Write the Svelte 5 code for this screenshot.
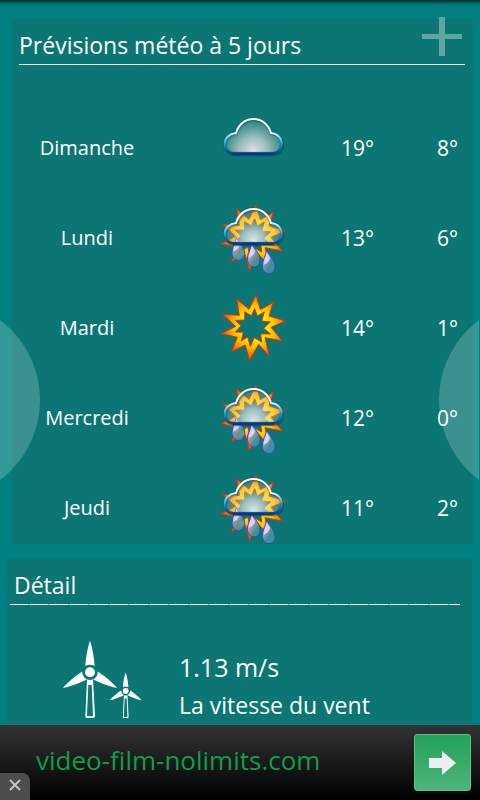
<script lang="ts">
	// Types/constants
	type Weather = 'cloud' | 'sun' | 'showers'

	type Forecast = {
		day: string
		weather: Weather
		label: string
		high: number
		low: number
	}

	const forecasts: Forecast[] = [
		{ day: 'Dimanche', weather: 'cloud', label: 'Nuageux', high: 19, low: 8 },
		{ day: 'Lundi', weather: 'showers', label: 'Averses', high: 13, low: 6 },
		{ day: 'Mardi', weather: 'sun', label: 'Ensoleillé', high: 14, low: 1 },
		{ day: 'Mercredi', weather: 'showers', label: 'Averses', high: 12, low: 0 },
		{ day: 'Jeudi', weather: 'showers', label: 'Averses', high: 11, low: 2 },
	]

	const cloudPath = 'M72 145C54 145 44 131 44 116C44 99 58 86 78 84C85 59 105 42 130 42C155 42 176 59 183 84C203 86 215 99 215 116C215 132 205 145 187 145Z'
	const sunPath = 'M138 30L151 74L190 52L177 93L226 108L183 127L217 168L165 158L178 213L146 178L118 226L106 180L64 200L82 157L33 146L77 124L38 88L88 91L80 42L117 73Z'
		+ 'M134 71L124 92L104 80L104 105L76 106L93 122L76 141L100 142L94 168L113 156L121 184L133 158L155 171L152 147L182 147L161 130L181 111L155 108L163 81L142 93Z'
</script>


<div class="app">
	<main>
		<section class="card forecast">
			<header>
				<h2>Prévisions météo à 5 jours</h2>
				<button type="button" class="add" aria-label="Ajouter">
					<svg viewBox="0 0 40 40" aria-hidden="true">
						<path d="M17 0H23V17H40V22H23V39H17V22H0V17H17Z" />
					</svg>
				</button>
			</header>

			<table>
				<colgroup>
					<col class="day" />
					<col />
					<col class="temperature" />
					<col class="temperature" />
				</colgroup>
				<tbody>
					{#each forecasts as forecast}
						<tr>
							<th scope="row">{forecast.day}</th>
							<td>{@render weatherIcon(forecast.weather, forecast.label)}</td>
							<td>{forecast.high}°</td>
							<td>{forecast.low}°</td>
						</tr>
					{/each}
				</tbody>
			</table>
		</section>

		<section class="card detail">
			<header>
				<h2>Détail</h2>
			</header>

			<div class="wind">
				<svg viewBox="66 30 240 240" aria-hidden="true">
					{@render turbine()}
					<g transform="translate(257 183) scale(0.59) translate(-150 -127)">
						{@render turbine()}
					</g>
				</svg>
				<div>
					<p class="speed">1.13 m/s</p>
					<p>La vitesse du vent</p>
				</div>
			</div>
		</section>
	</main>

	<button type="button" class="pager previous" aria-label="Précédent"></button>
	<button type="button" class="pager next" aria-label="Suivant"></button>

	<aside>
		<a href="#video">video-film-nolimits.com</a>
		<button type="button" class="go" aria-label="Ouvrir">
			<svg viewBox="0 0 27 24" aria-hidden="true">
				<path d="M0 7H13V0L27 12L13 24V17H0Z" />
			</svg>
		</button>
		<button type="button" class="close" aria-label="Fermer">
			<svg viewBox="0 0 12 12" aria-hidden="true">
				<path d="M1 1L11 11M11 1L1 11" />
			</svg>
		</button>
	</aside>
</div>


{#snippet weatherIcon(weather: Weather, label: string)}
	<svg class="weather" viewBox="18 21 222 216" role="img" aria-label={label}>
		<defs>
			<linearGradient id="cloud-edge" gradientUnits="userSpaceOnUse" x1="0" y1="40" x2="0" y2="148">
				<stop offset="0" stop-color="#fff" />
				<stop offset="0.4" stop-color="#e8f4ff" />
				<stop offset="0.62" stop-color="#3cc0f4" />
				<stop offset="0.85" stop-color="#0a66b4" />
				<stop offset="1" stop-color="#073a88" />
			</linearGradient>
			<radialGradient id="cloud-fill" gradientUnits="userSpaceOnUse" cx="130" cy="140" r="95">
				<stop offset="0" stop-color="#e4e6e8" />
				<stop offset="0.45" stop-color="#c4d0d0" stop-opacity="0.8" />
				<stop offset="1" stop-color="#a0c0bc" stop-opacity="0.2" />
			</radialGradient>
			<radialGradient id="haze-fill" gradientUnits="userSpaceOnUse" cx="130" cy="136" r="95">
				<stop offset="0" stop-color="#e0e6e6" />
				<stop offset="0.35" stop-color="#ccd8d8" stop-opacity="0.75" />
				<stop offset="0.6" stop-color="#d8dcc8" stop-opacity="0.3" />
				<stop offset="1" stop-color="#d8dcc8" stop-opacity="0.15" />
			</radialGradient>
			<radialGradient id="sun-fill" gradientUnits="userSpaceOnUse" cx="134" cy="124" r="104">
				<stop offset="0.35" stop-color="#ffe800" />
				<stop offset="0.6" stop-color="#ffc000" />
				<stop offset="1" stop-color="#f04000" />
			</radialGradient>
			<linearGradient id="drop-fill" x1="0" y1="0" x2="1" y2="1">
				<stop offset="0.2" stop-color="#c4b4f0" />
				<stop offset="0.6" stop-color="#4c90a8" />
				<stop offset="1" stop-color="#30a8a8" />
			</linearGradient>
		</defs>

		{#if weather !== 'cloud'}
			<path d={sunPath} fill="url(#sun-fill)" fill-rule="evenodd" stroke="#e03010" stroke-width="3" />
		{/if}
		{#if weather === 'showers'}
			{@render drop(85, 127)}
			{@render drop(131, 146)}
			{@render drop(176, 166)}
		{/if}
		{#if weather !== 'sun'}
			<path class="shadow" d={cloudPath} />
			<path
				d={cloudPath}
				fill={weather === 'showers' ? 'url(#haze-fill)' : 'url(#cloud-fill)'}
				stroke="#164c60"
				stroke-width="10"
				stroke-opacity="0.5"
			/>
			<path d={cloudPath} fill="none" stroke="url(#cloud-edge)" stroke-width="6" />
			<path d="M68 147H192" stroke="#083880" stroke-width="8" />
		{/if}
	</svg>
{/snippet}

{#snippet drop(x: number, y: number)}
	<g transform="translate({x} {y})">
		<path
			d="M-6 0C-8 16 -19 28 -19 46C-19 60 -10 70 1 70C12 70 19 60 19 48C19 30 4 18 -6 0Z"
			fill="url(#drop-fill)"
			fill-opacity="0.85"
			stroke="#4040c0"
			stroke-width="3"
		/>
		<path d="M-6 6C-8 20 -16 30 -15 44C-6 38 2 34 4 22Z" fill="#dcd0ff" />
	</g>
{/snippet}

{#snippet turbine()}
	<circle cx="150" cy="127" r="15" />
	{#each [0, 120, 240] as angle}
		<path d="M136 108C138 78 144 48 150 33C156 48 162 78 164 108Q150 100 136 108Z" transform="rotate({angle} 150 127)" />
	{/each}
	<path d="M141 148Q150 152 159 148L165 258Q165 264 159 264H141Q135 264 136 258ZM145 165L141 256Q141 259 145 259H155Q159 259 159 256L155 165Z" fill-rule="evenodd" />
{/snippet}


<style>
	:global(body) {
		margin: 0;
		background: #008080;
	}

	.app {
		display: flex;
		flex-direction: column;
		height: 100vh;
		font-family: 'Open Sans', 'Noto Sans', sans-serif;
		color: #fff;
		background: linear-gradient(#002c2c, #007474 4px, #008080 8px);
	}

	main {
		flex: 1;
		min-height: 0;
		overflow: hidden;
		padding: 19px 7px 0;
	}

	button {
		padding: 0;
		border: 0;
		background: none;
		cursor: pointer;
	}

	h2,
	p {
		margin: 0;
		font-weight: 400;
	}

	h2 {
		font-size: 23px;
		line-height: 30px;
	}

	.card {
		background: #0b7674;

		> header {
			display: flex;
			justify-content: space-between;
			box-sizing: border-box;
			height: 46px;
			padding-top: 11px;
			border-bottom: 1px solid #fff;
		}
	}

	.forecast {
		margin-left: 5px;

		> header {
			margin: 0 8px 29px 7px;
		}
	}

	.add {
		width: 40px;
		height: 40px;
		margin: -13px 3px 0 0;

		svg {
			display: block;
			fill: #5fa5a4;
		}
	}

	table {
		width: 100%;
		padding-right: 15px;
		border-spacing: 0;
		table-layout: fixed;
		font-size: 21px;
		line-height: 30px;
	}

	.day {
		width: 150px;
	}

	.temperature {
		width: 84px;
	}

	th,
	td {
		height: 72px;
		padding: 18px 0 0;
		font-weight: 400;
		text-align: right;
	}

	th {
		font-size: 20px;
		text-align: center;
	}

	.weather {
		display: block;
		width: 74px;
		height: 72px;
		margin-left: auto;
	}

	.shadow {
		fill: none;
		stroke: #034a50;
		stroke-width: 6px;
		opacity: 0.5;
		transform: translate(4px, 6px);
	}

	.detail {
		margin: 15px 1px 0 0;

		> header {
			margin: 0 12px 0 3px;
			padding-left: 4px;
			border-bottom-style: none;
			background: repeating-linear-gradient(90deg, #fff 0 18px, #8fc0bf 18px 20px) bottom / 100% 1px no-repeat;
		}
	}

	.wind {
		display: flex;
		gap: 37px;
		padding: 35px 0 0 55px;

		svg {
			width: 80px;
			height: 80px;
			fill: #fff;
		}

		> div {
			padding-top: 8px;
		}

		p {
			font-size: 23px;
			line-height: 38px;
		}

		.speed {
			font-size: 25px;
		}
	}

	.pager {
		position: fixed;
		top: calc(50% - 80px);
		width: 40px;
		height: 160px;
		background: rgb(255 255 255 / 0.2);
	}

	.previous {
		left: 0;
		clip-path: circle(100px at -60px 80px);
	}

	.next {
		right: 1px;
		clip-path: circle(100px at 100px 80px);
	}

	aside {
		position: relative;
		display: flex;
		align-items: center;
		justify-content: space-between;
		height: 75px;
		padding: 0 9px 0 36px;
		background: linear-gradient(#333, #000);

		a {
			padding-bottom: 6px;
			font-size: 26px;
			line-height: 36px;
			color: #0f9d4c;
			text-decoration: none;
		}
	}

	.go {
		display: grid;
		place-items: center;
		box-sizing: border-box;
		width: 57px;
		height: 57px;
		border: 1px solid #5cc487;
		border-radius: 3px;
		background: linear-gradient(#22a25a, #4db47c);

		svg {
			width: 27px;
			height: 24px;
			fill: #eee;
		}
	}

	.close {
		position: absolute;
		bottom: 0;
		left: 0;
		display: grid;
		place-items: center;
		width: 30px;
		height: 27px;
		border-top-right-radius: 8px;
		background: #4d4d4d;

		svg {
			width: 12px;
			height: 12px;
			margin-bottom: 3px;
			fill: none;
			stroke: #c4c4c4;
			stroke-width: 2;
		}
	}
</style>
